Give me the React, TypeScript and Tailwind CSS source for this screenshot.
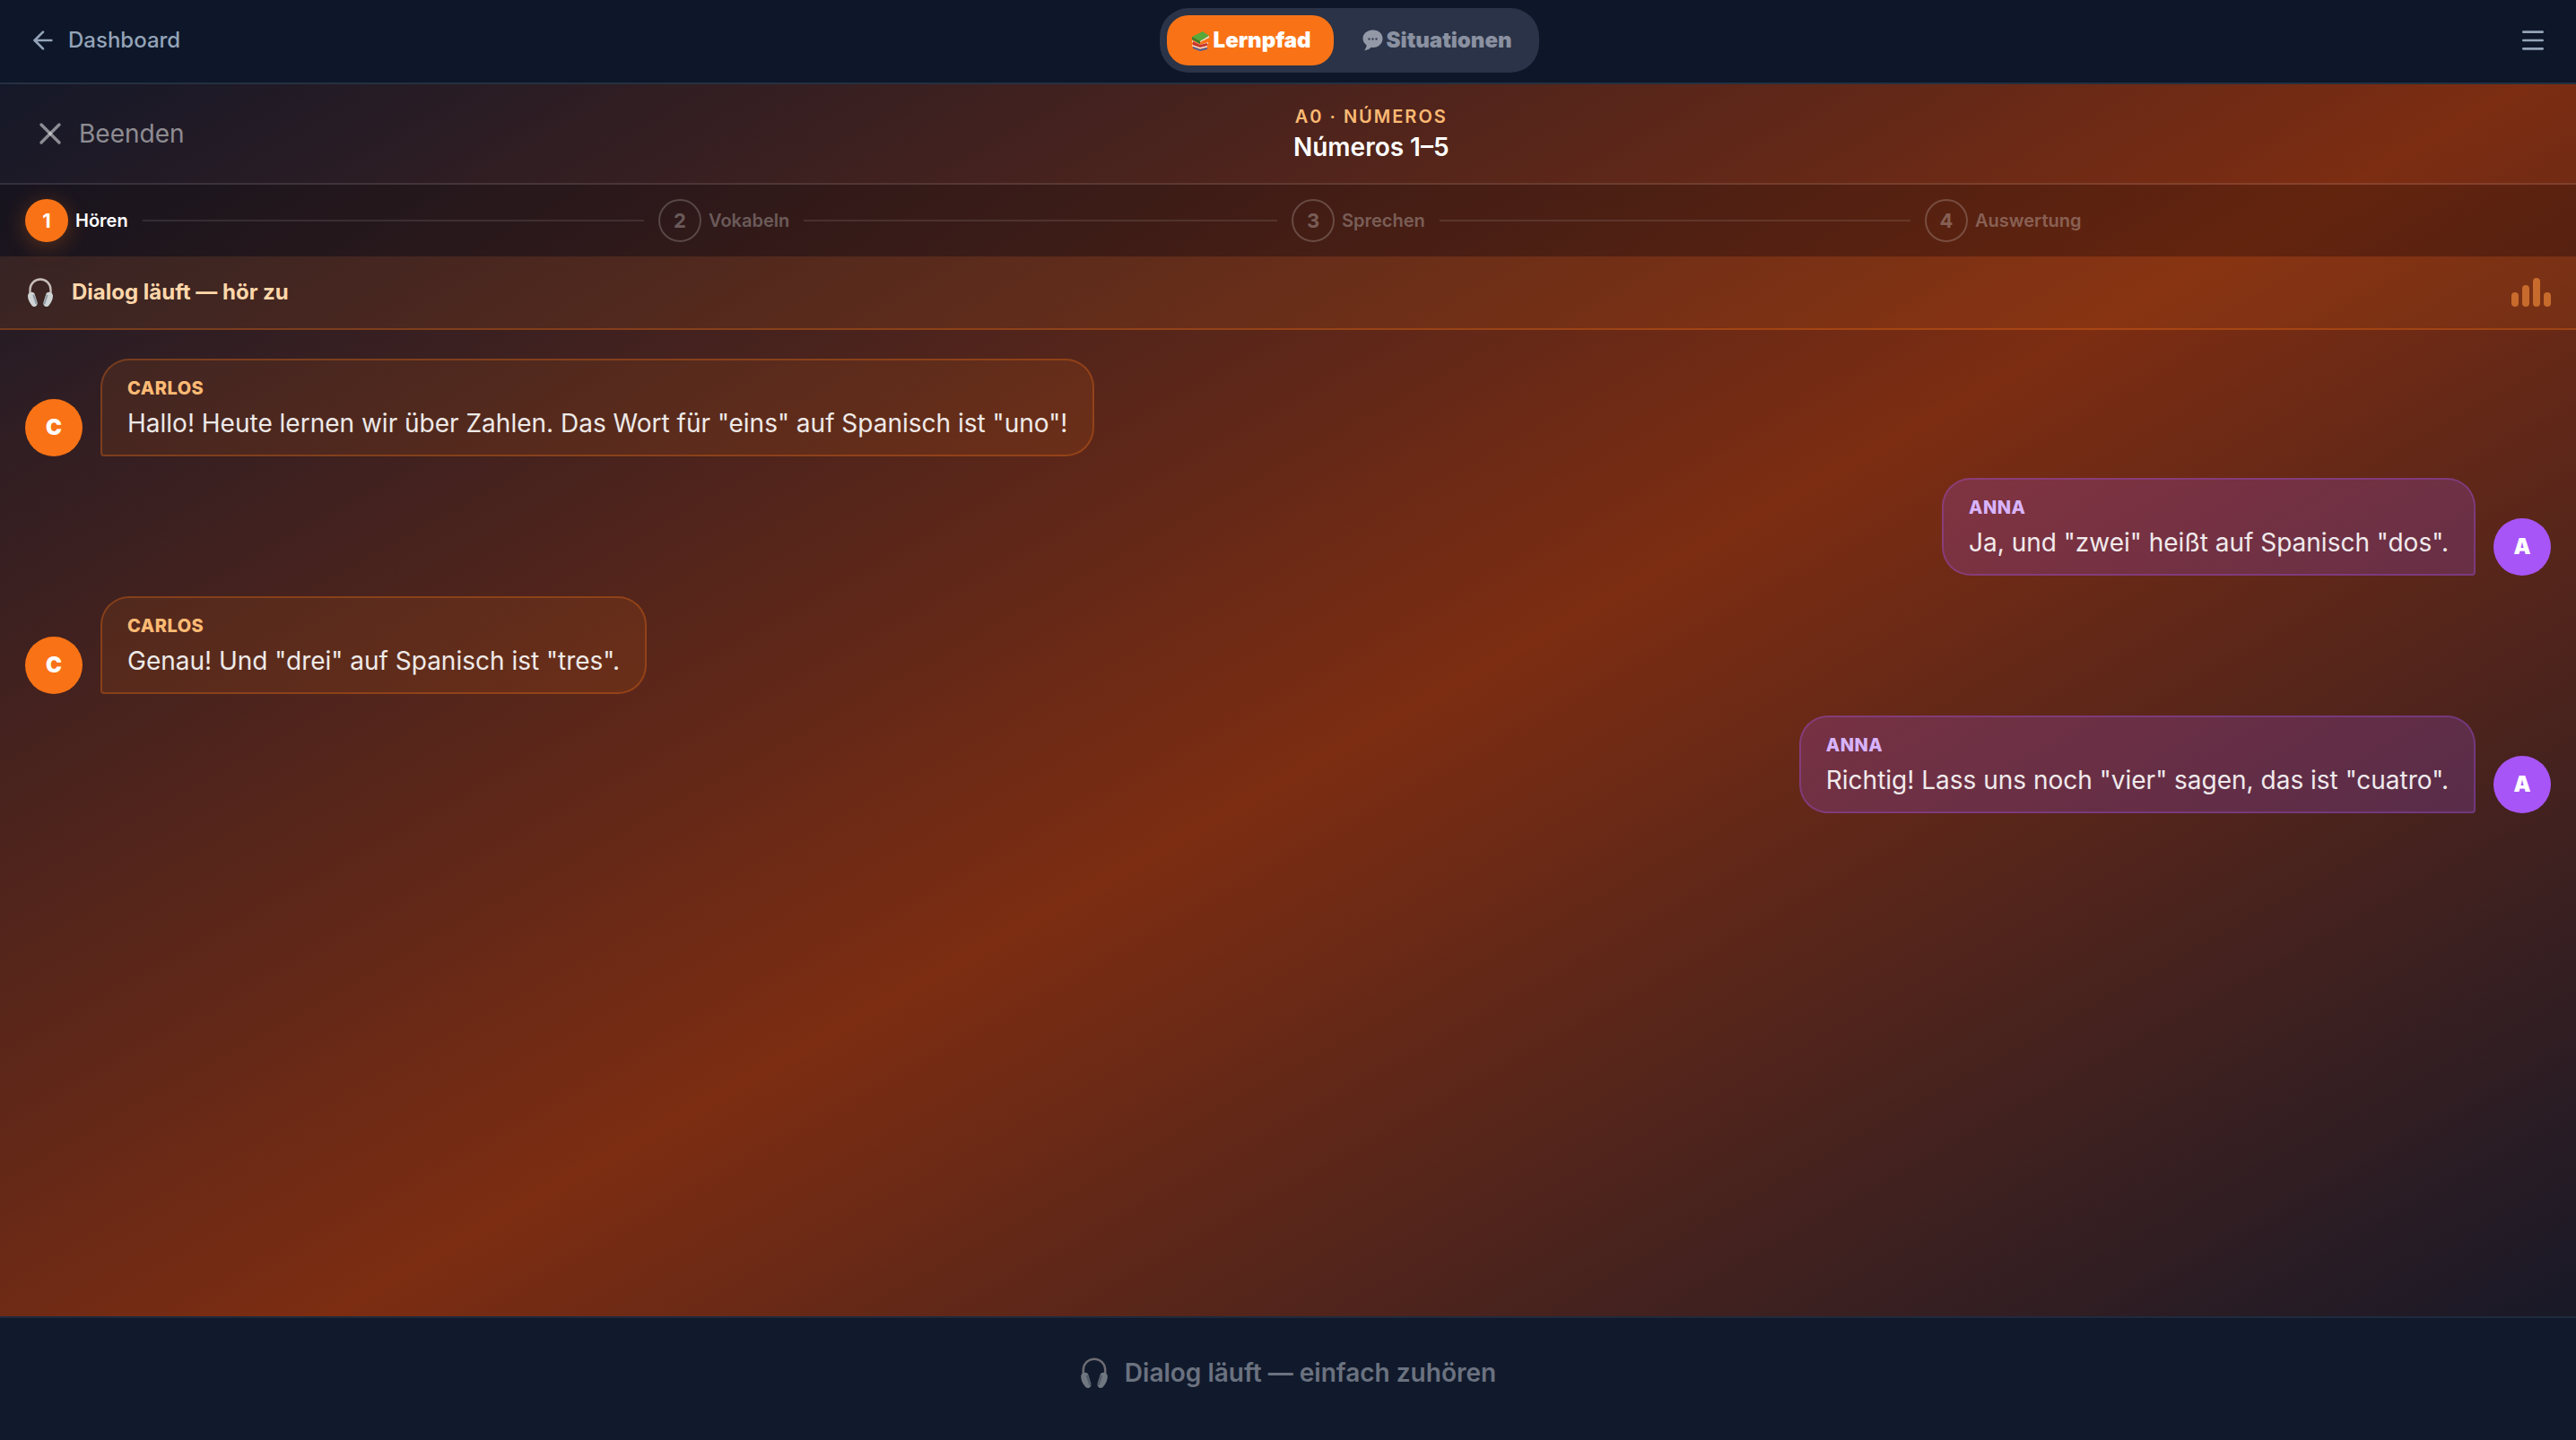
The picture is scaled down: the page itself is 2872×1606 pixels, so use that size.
import { ArrowLeft, Menu, X } from "lucide-react";

function Headphones({ className }: { className: string }) {
  return (
    <svg viewBox="0 0 30 34" className={className}>
      <path d="M3.500 19V14a11.500 11.500 0 0 1 23 0v5" fill="none" stroke="#c8bdb8" strokeWidth="2.400" />
      <path d="M3 17.500c2.500-1.500 4.500-.5 5.500 1l3 9.500c.6 2.500-.5 4.500-2.500 5-1.500.4-3-.3-4-2C3 28.500 1 25 1 21c0-1.500.8-3 2-3.500z" fill="#cfd3d4" />
      <path d="M27 17.500c-2.500-1.500-4.500-.5-5.500 1l-3 9.500c-.6 2.500.5 4.500 2.500 5 1.500.4 3-.3 4-2 2-2.500 4-6 4-10 0-1.500-.8-3-2-3.500z" fill="#cfd3d4" />
      <path d="M7.500 20.500l3 9" stroke="#8f9ba3" strokeWidth="2" strokeLinecap="round" />
      <path d="M22.500 20.500l-3 9" stroke="#8f9ba3" strokeWidth="2" strokeLinecap="round" />
    </svg>
  );
}

function Books() {
  return (
    <svg viewBox="0 0 22 24" className="w-[22px] h-[24px] shrink-0">
      <path d="M2 12l9 5 9-3v2l-9 3-9-5z" fill="#e9dcd0" />
      <path d="M2 8l12-6 7 5-10 6z" fill="#59a83a" />
      <path d="M2 8l9 5v3L2 11z" fill="#3a7d2b" />
      <path d="M11 13l10-6v2l-10 5z" fill="#e8e4d8" />
      <path d="M3 13l8 4 8-2v3l-8 2-8-3z" fill="#c9362f" />
      <path d="M2 17l9 3 8-2v1.500l-8 2-9-3z" fill="#efe0d8" />
      <path d="M3 19l8 3 8-2v2l-8 2-8-3z" fill="#4a5f9c" />
    </svg>
  );
}

function Bubble() {
  return (
    <svg viewBox="0 0 24 24" className="w-[24px] h-[24px] shrink-0">
      <path d="M13 0.500C6.500 0.500 1.500 4.500 1.500 10c0 3 1.500 5.500 4 7.200 0 2.300-1 4.500-2.500 6 3 0 6-1.500 7.500-3.500.9.200 1.700.300 2.500.300 6 0 10.500-4.500 10.500-10S19 .5 13 .5z" fill="#9499a8" />
      <circle cx="8.500" cy="10.500" r="1.200" fill="#3a4152" />
      <circle cx="12.500" cy="10.500" r="1.200" fill="#3a4152" />
      <circle cx="16.500" cy="10.500" r="1.200" fill="#3a4152" />
    </svg>
  );
}

const steps = [
  { n: 1, label: "Hören" },
  { n: 2, label: "Vokabeln" },
  { n: 3, label: "Sprechen" },
  { n: 4, label: "Auswertung" },
];

const messages = [
  { who: "CARLOS", text: 'Hallo! Heute lernen wir über Zahlen. Das Wort für "eins" auf Spanisch ist "uno"!' },
  { who: "ANNA", text: 'Ja, und "zwei" heißt auf Spanisch "dos".' },
  { who: "CARLOS", text: 'Genau! Und "drei" auf Spanisch ist "tres".' },
  { who: "ANNA", text: 'Richtig! Lass uns noch "vier" sagen, das ist "cuatro".' },
];

export default function App() {
  return (
    <div className="h-screen flex flex-col overflow-hidden [font-family:Inter,sans-serif] bg-[linear-gradient(to_bottom_right,#0f172a_0%,#7c2d12_52%,#0f172a_100%)]">
      {/* Top nav */}
      <div className="h-[94px] shrink-0 flex items-center justify-between px-8 pb-[2px] bg-[#0d1729] border-b-2 border-[#253041]">
        <div className="flex items-center gap-[12px] text-[#94a3b8] text-[24px] font-medium">
          <ArrowLeft className="w-[32px] h-[32px]" strokeWidth={2} />
          Dashboard
        </div>
        <div className="w-[423px] h-[72px] flex items-center gap-[8px] p-[8px] rounded-[32px] bg-[#2a3347]">
          <div className="w-[186px] h-[56px] flex items-center justify-center gap-[4px] rounded-[24px] bg-[#f97316] text-white text-[24px] font-black">
            <Books />
            Lernpfad
          </div>
          <div className="flex-1 h-[56px] flex items-center justify-center gap-[4px] text-[#8a91a1] text-[24px] font-black">
            <Bubble />
            Situationen
          </div>
        </div>
        <Menu className="w-[32px] h-[32px] text-[#94a3b8]" strokeWidth={2} />
      </div>

      {/* Lesson header */}
      <div className="h-[112px] shrink-0 flex items-center justify-between px-8 border-b-2 border-white/10">
        <div className="flex items-center gap-[12px] pl-[4px] pr-[12px] text-white/50 text-[28px]">
          <X className="w-[40px] h-[40px]" strokeWidth={2} />
          Beenden
        </div>
        <div className="text-center">
          <div className="text-[#fdba74] text-[20px] leading-[30px] font-semibold tracking-[2px]">A0 · NÚMEROS</div>
          <div className="text-white text-[28px] leading-[38px] font-semibold">Números 1–5</div>
        </div>
        <div className="w-0" />
      </div>

      {/* Stepper */}
      <div className="h-[80px] shrink-0 flex items-center gap-4 pl-7 pr-[36px] bg-black/20">
        {steps.map((s, i) => (
          <div key={s.n} className="flex-1 flex items-center">
            {i === 0 ? (
              <div className="w-[48px] h-[48px] rounded-full flex items-center justify-center bg-[#f97316] text-white text-[22px] font-bold shadow-[0_4px_24px_rgba(249,115,22,0.3)]">{s.n}</div>
            ) : (
              <div className="w-[48px] h-[48px] rounded-full flex items-center justify-center border-2 border-white/20 text-white/30 text-[22px] font-bold">{s.n}</div>
            )}
            <span className={i === 0 ? "ml-[8px] text-white text-[20px] font-semibold" : "ml-[8px] text-white/30 text-[20px] font-semibold"}>{s.label}</span>
            {i < 3 && <div className="flex-1 ml-[16px] h-[2px] bg-white/10" />}
          </div>
        ))}
      </div>

      {/* Now playing banner */}
      <div className="h-[82px] shrink-0 flex items-center justify-between pl-[30px] pr-[28px] bg-[#f97316]/10 border-b-2 border-[#f97316]/30">
        <div className="flex items-center gap-[20px] text-[#fed7aa] text-[24px] font-bold">
          <Headphones className="w-[30px] h-[34px]" />
          Dialog läuft — hör zu
        </div>
        <div className="flex items-end gap-[4px]">
          <div className="w-[8px] h-[16px] rounded-full bg-[#fb923c]/60" />
          <div className="w-[8px] h-[24px] rounded-full bg-[#fb923c]/60" />
          <div className="w-[8px] h-[32px] rounded-full bg-[#fb923c]/60" />
          <div className="w-[8px] h-[16px] rounded-full bg-[#fb923c]/60" />
        </div>
      </div>

      {/* Dialog */}
      <div className="flex-1 flex flex-col gap-[23.67px] pt-[32px] px-7">
        {messages.map((m, i) =>
          m.who === "CARLOS" ? (
            <div key={i} className="flex items-end gap-[20px]">
              <div className="w-[64px] h-[64px] rounded-full flex items-center justify-center bg-[#f97316] text-white text-[24px] font-black">C</div>
              <div className="px-[28px] pt-[16px] pb-[13px] rounded-[32px] rounded-bl-[4px] bg-[#f97316]/10 border-2 border-[#f97316]/30">
                <div className="text-[#fdba74] text-[20px] leading-[30px] font-extrabold tracking-[0.5px]">{m.who}</div>
                <div className="mt-[2px] text-white/90 text-[28px] leading-[44px]">{m.text}</div>
              </div>
            </div>
          ) : (
            <div key={i} className="flex items-end justify-end gap-[20px]">
              <div className="px-[28px] pt-[16px] pb-[13px] rounded-[32px] rounded-br-[4px] bg-[#a855f7]/20 border-2 border-[#a855f7]/30">
                <div className="text-[#d8b4fe] text-[20px] leading-[30px] font-extrabold tracking-[0.5px]">{m.who}</div>
                <div className="mt-[2px] text-white/90 text-[28px] leading-[44px]">{m.text}</div>
              </div>
              <div className="w-[64px] h-[64px] rounded-full flex items-center justify-center bg-[#a855f7] text-white text-[24px] font-black">A</div>
            </div>
          )
        )}
      </div>

      {/* Footer */}
      <div className="h-[138px] shrink-0 flex items-center justify-center gap-[18px] pb-[14px] bg-[#111a2c] border-t-2 border-[#1f2a3d] text-[#6b7280] text-[28px] font-semibold">
        <Headphones className="w-[32px] h-[36px] opacity-50" />
        Dialog läuft — einfach zuhören
      </div>
    </div>
  );
}
